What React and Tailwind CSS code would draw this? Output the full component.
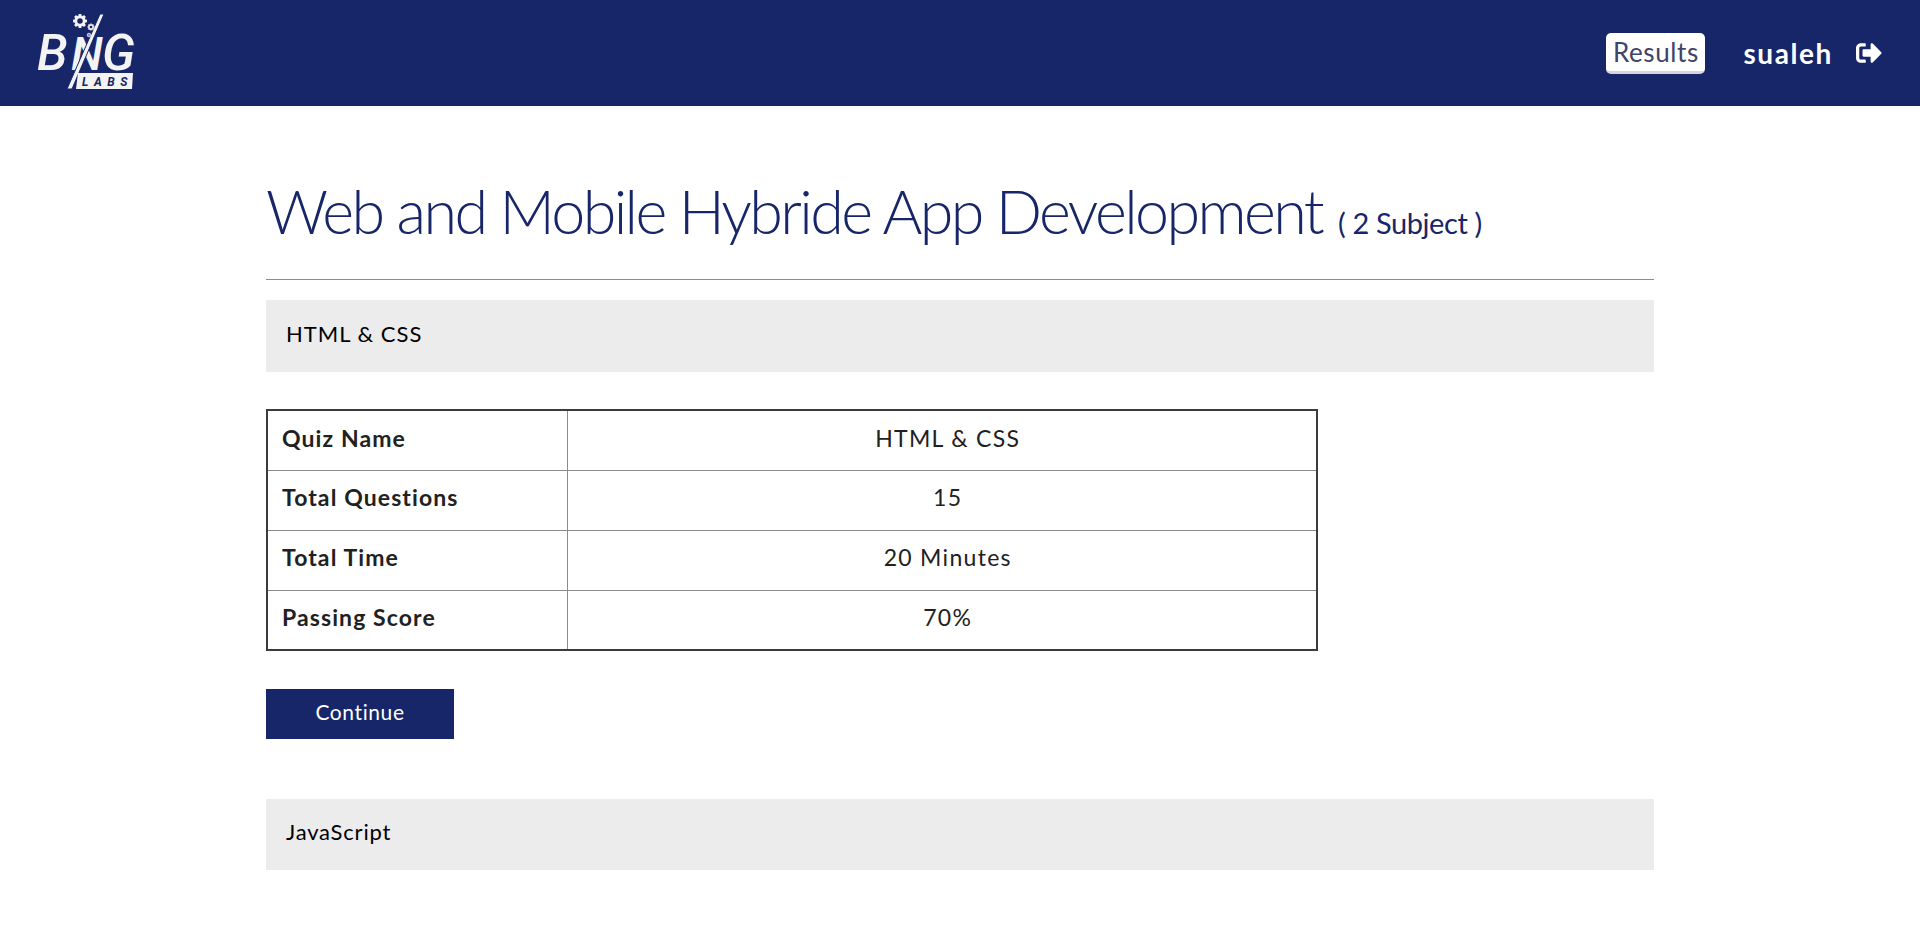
import { FaSignOutAlt } from "react-icons/fa";

const rows = [
  ["Quiz Name", "HTML & CSS"],
  ["Total Questions", "15"],
  ["Total Time", "20 Minutes"],
  ["Passing Score", "70%"],
];

function Gear({ cx, cy, r }) {
  const teeth = [0, 45, 90, 135, 180, 225, 270, 315];
  return (
    <g fill="#f3f3f3">
      <circle cx={cx} cy={cy} r={r * 0.6} fill="none" stroke="#f3f3f3" strokeWidth={r * 0.42} />
      {teeth.map((a) => (
        <rect
          key={a}
          x={cx - r * 0.2}
          y={cy - r}
          width={r * 0.4}
          height={r * 0.4}
          transform={`rotate(${a} ${cx} ${cy})`}
        />
      ))}
    </g>
  );
}

function Logo() {
  return (
    <svg width="140" height="106" viewBox="0 0 140 106">
      <text y="70" fontFamily="Roboto, sans-serif" fontStyle="italic" fontWeight="500" fontSize="50" fill="#f3f3f3">
        <tspan x="37">B</tspan>
        <tspan x="71" fontSize="46">N</tspan>
        <tspan x="102">G</tspan>
      </text>
      <polygon points="67,89 72,89 104,14 100,14" fill="#f3f3f3" stroke="#172669" strokeWidth="1" />
      <Gear cx={80} cy={21} r={7} />
      <Gear cx={91} cy={27} r={3.5} />
      <Gear cx={89} cy={35} r={2.2} />
      <polygon points="78,73 133,73 132,89 76,89" fill="#f3f3f3" />
      <text x="82" y="86" fontFamily="Roboto, sans-serif" fontStyle="italic" fontWeight="700" fontSize="12" letterSpacing="5.5" fill="#172669">LABS</text>
    </svg>
  );
}

export default function App() {
  return (
    <div className="min-h-[936px] bg-white font-['Lato',sans-serif]">
      {/* Header */}
      <div className="h-[106px] bg-[#172669] flex items-center justify-between pr-[38px]">
        <Logo />
        <div className="flex items-center">
          <button className="h-[41px] w-[99px] mt-[1px] rounded-[5px] bg-white border-b-[3px] border-[#d4d4e2] text-[#3f4468] text-[26px] tracking-[0.6px] leading-none flex items-center justify-center">
            Results
          </button>
          <span className="ml-[38px] text-white text-[28px] font-bold tracking-[1.6px]">sualeh</span>
          <FaSignOutAlt className="ml-[23px] text-white text-[26px]" />
        </div>
      </div>

      {/* Content */}
      <div className="mx-[266px]">
        <div className="h-[174px] border-b border-[#8c8c8c] pt-[69px]">
          <span className="text-[#172669] text-[61px] font-light leading-[72px] tracking-[-2.6px]">
            Web and Mobile Hybride App Development
          </span>
          <span className="text-[#172669] text-[29px] ml-[16px] tracking-[-0.4px]">( 2 Subject )</span>
        </div>

        <div className="mt-[20px] h-[72px] bg-[#ececec] flex items-center pl-[20px] pb-[6px] text-black text-[22px] tracking-[1px]">
          HTML &amp; CSS
        </div>

        <table className="mt-[37px] w-[1052px] h-[242px] border-collapse border-2 border-[#3c3c3c] text-[#212121] text-[23px] table-fixed">
          <tbody>
            {rows.map(([label, value]) => (
              <tr key={label} className="h-[60px] border-b border-[#8c8c8c] last:border-b-0">
                <td className="w-[300px] pl-[14px] pb-[5px] border-r border-[#8c8c8c] font-bold tracking-[1.1px]">{label}</td>
                <td className="text-center pl-[12px] pb-[5px] tracking-[1.3px]">{value}</td>
              </tr>
            ))}
          </tbody>
        </table>

        <button className="mt-[38px] block w-[188px] h-[50px] pb-[5px] bg-[#172669] text-white text-[21px] tracking-[0.6px]">
          Continue
        </button>

        <div className="mt-[60px] h-[71px] bg-[#ececec] flex items-center pl-[20px] pb-[6px] text-black text-[22px] tracking-[0.8px]">
          JavaScript
        </div>
      </div>
    </div>
  );
}
